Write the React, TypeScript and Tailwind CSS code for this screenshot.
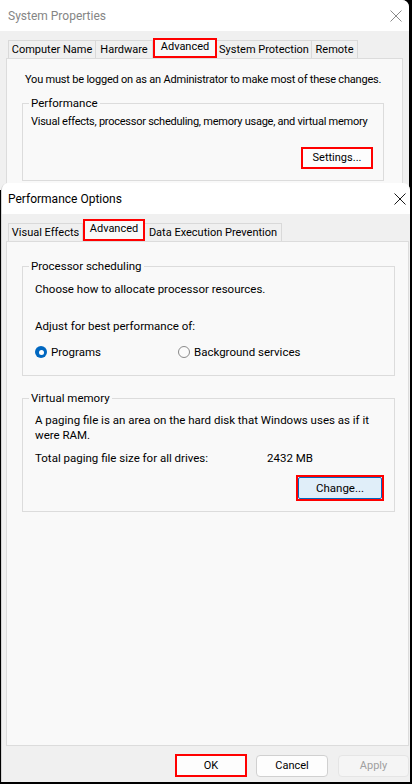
import React from "react";

function CloseX({ color }: { color: string }) {
  return (
    <svg width="12" height="12" viewBox="0 0 12 12" fill="none" stroke={color} strokeWidth="1">
      <path d="M0.5 0.5 L11.5 11.5 M11.5 0.5 L0.5 11.5" />
    </svg>
  );
}

function Tab({ label, className }: { label: string; className: string }) {
  return (
    <div
      className={`h-[18px] flex items-center justify-center border-t border-r border-[#d9d9d9] bg-[#f0f0f0] text-[11px] leading-[16px] text-black whitespace-nowrap ${className}`}
    >
      {label}
    </div>
  );
}

function SelTab({ label, className }: { label: string; className: string }) {
  return (
    <div
      className={`flex items-center justify-center border-2 border-[#ff0000] bg-[#f9f9f9] text-[11px] leading-[16px] text-black pb-[2px] whitespace-nowrap ${className}`}
    >
      {label}
    </div>
  );
}

function Group({ label, className, children }: { label: string; className: string; children: React.ReactNode }) {
  return (
    <div className={`relative border border-[#dcdcdc] ${className}`}>
      <span className="absolute -top-[9px] left-[6px] px-[2px] bg-[#f9f9f9] text-[11.5px] leading-[16px] text-black whitespace-nowrap">
        {label}
      </span>
      {children}
    </div>
  );
}

export default function App() {
  return (
    <div className="w-[412px] h-[784px] bg-black overflow-hidden flex flex-col font-['Roboto','Liberation_Sans',sans-serif] text-black">
      {/* System Properties (behind) */}
      <div className="w-[409px] h-[190px] shrink-0 rounded-tr-[7px] overflow-hidden bg-[#f0f0f0] flex flex-col">
        <div className="h-[31px] shrink-0 bg-white flex items-center justify-between pl-[8px] pr-[7px]">
          <span className="text-[12px] leading-[16px] text-[#858585]">System Properties</span>
          <CloseX color="#8a8a8a" />
        </div>
        <div className="h-[27px] shrink-0 flex items-end pl-[8px]">
          <Tab label="Computer Name" className="w-[88px] border-l" />
          <Tab label="Hardware" className="w-[57px]" />
          <SelTab label="Advanced" className="w-[64px] h-[20px]" />
          <Tab label="System Protection" className="w-[95px]" />
          <Tab label="Remote" className="w-[46px]" />
        </div>
        <div className="ml-[6px] w-[397px] flex-1 border border-[#dcdcdc] bg-[#f9f9f9] pt-[13px]">
          <div className="pl-[18px] text-[11px] leading-[16px] whitespace-nowrap tracking-[-0.2px]">
            You must be logged on as an Administrator to make most of these changes.
          </div>
          <Group label="Performance" className="ml-[15px] mt-[15px] w-[362px] pt-[10px] pb-[11px]">
            <div className="pl-[8px] text-[11px] leading-[16px] whitespace-nowrap tracking-[-0.25px]">
              Visual effects, processor scheduling, memory usage, and virtual memory
            </div>
            <div className="flex justify-end mt-[17px] pr-[10px]">
              <div className="w-[72px] h-[22px] border-2 border-[#ff0000] bg-[#fdfdfd] flex items-center justify-center text-[11px] leading-[16px]">
                Settings...
              </div>
            </div>
          </Group>
        </div>
      </div>

      {/* Performance Options (front) */}
      <div className="-mt-[7px] ml-[1px] w-[409px] h-[599px] shrink-0 rounded-t-[7px] overflow-hidden bg-[#f0f0f0] border-l border-[#d4d4d4] flex flex-col">
        <div className="h-[31px] shrink-0 bg-white flex items-center justify-between pl-[6px] pr-[4px]">
          <span className="text-[12px] leading-[16px] text-black">Performance Options</span>
          <CloseX color="#1a1a1a" />
        </div>
        <div className="h-[27px] shrink-0 flex items-end pl-[6px]">
          <Tab label="Visual Effects" className="w-[75px] border-l" />
          <SelTab label="Advanced" className="w-[62px] h-[22px]" />
          <Tab label="Data Execution Prevention" className="w-[137px]" />
        </div>
        <div className="ml-[4px] w-[403px] h-[505px] shrink-0 border border-[#dcdcdc] bg-[#f9f9f9] pt-[24px]">
          <Group label="Processor scheduling" className="ml-[15px] w-[373px] pt-[14px] pb-[15px]">
            <div className="pl-[12px] text-[11.5px] leading-[16px]">Choose how to allocate processor resources.</div>
            <div className="pl-[12px] mt-[21px] text-[11.5px] leading-[16px]">Adjust for best performance of:</div>
            <div className="pl-[12px] mt-[10px] flex items-center text-[11.5px] leading-[16px]">
              <div className="w-[143px] flex items-center gap-[4px]">
                <span className="w-[12px] h-[12px] rounded-full bg-[#0067c0] flex items-center justify-center">
                  <span className="w-[5px] h-[5px] rounded-full bg-white" />
                </span>
                <span>Programs</span>
              </div>
              <div className="flex items-center gap-[4px]">
                <span className="w-[12px] h-[12px] rounded-full border border-[#8a8a8a] bg-[#fbfbfb]" />
                <span>Background services</span>
              </div>
            </div>
          </Group>
          <Group label="Virtual memory" className="ml-[15px] mt-[22px] w-[373px] pt-[14px] pb-[10px]">
            <div className="pl-[12px] text-[11.5px] leading-[15px] whitespace-nowrap">
              A paging file is an area on the hard disk that Windows uses as if it
              <br />
              were RAM.
            </div>
            <div className="pl-[12px] mt-[7px] flex text-[11.5px] leading-[16px]">
              <span className="w-[232px]">Total paging file size for all drives:</span>
              <span>2432 MB</span>
            </div>
            <div className="flex justify-end mt-[9px] pr-[10px]">
              <div className="w-[88px] h-[26px] border-2 border-[#ff0000] bg-[#f9f9f9] flex">
                <div className="flex-1 border border-[#0067c0] rounded-[2px] bg-[#e0eef9] flex items-center justify-center text-[11.5px] leading-[16px]">
                  Change...
                </div>
              </div>
            </div>
          </Group>
        </div>
        <div className="flex justify-end items-center pt-[8px] pr-[1px]">
          <div className="w-[72px] h-[23px] border-2 border-[#ff0000] bg-[#fdfdfd] flex items-center justify-center text-[11px] leading-[16px]">
            OK
          </div>
          <div className="ml-[9px] w-[72px] h-[22px] border border-[#d0d0d0] rounded-[4px] bg-[#fdfdfd] flex items-center justify-center text-[11px] leading-[16px]">
            Cancel
          </div>
          <div className="ml-[10px] w-[71px] h-[22px] border border-[#e5e5e5] rounded-[4px] bg-[#f5f5f5] flex items-center justify-center text-[11px] leading-[16px] text-[#a0a0a0]">
            Apply
          </div>
        </div>
      </div>
    </div>
  );
}
